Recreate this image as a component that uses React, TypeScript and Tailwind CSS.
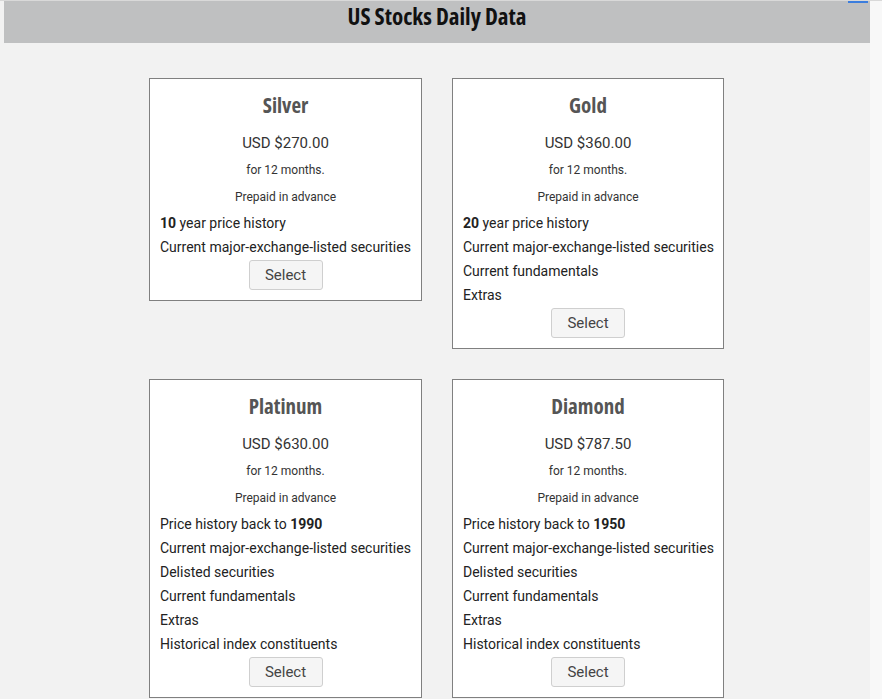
import React from "react";

type Plan = {
  name: string;
  price: string;
  features: React.ReactNode[];
};

const plans: Plan[] = [
  {
    name: "Silver",
    price: "USD $270.00",
    features: [
      <><b>10</b> year price history</>,
      "Current major-exchange-listed securities",
    ],
  },
  {
    name: "Gold",
    price: "USD $360.00",
    features: [
      <><b>20</b> year price history</>,
      "Current major-exchange-listed securities",
      "Current fundamentals",
      "Extras",
    ],
  },
  {
    name: "Platinum",
    price: "USD $630.00",
    features: [
      <>Price history back to <b>1990</b></>,
      "Current major-exchange-listed securities",
      "Delisted securities",
      "Current fundamentals",
      "Extras",
      "Historical index constituents",
    ],
  },
  {
    name: "Diamond",
    price: "USD $787.50",
    features: [
      <>Price history back to <b>1950</b></>,
      "Current major-exchange-listed securities",
      "Delisted securities",
      "Current fundamentals",
      "Extras",
      "Historical index constituents",
    ],
  },
];

function PlanCard({ plan }: { plan: Plan }) {
  return (
    <div className="flex flex-col border border-[#808080] bg-white px-[10px] pt-[14px] pb-[10px] text-center font-['Roboto',sans-serif]">
      <div className="h-[24px] text-[21px] leading-[24px] font-bold text-[#555] font-['Open_Sans','Liberation_Sans_Narrow',sans-serif] [font-stretch:condensed]">
        {plan.name}
      </div>
      <div className="mt-[16px] h-[20px] text-[15px] leading-[20px] text-[#333]">
        {plan.price}
      </div>
      <div className="mt-[7px] h-[20px] text-[12px] leading-[20px] text-[#333]">
        for 12 months.
      </div>
      <div className="mt-[7px] h-[20px] text-[12px] leading-[20px] text-[#333]">
        Prepaid in advance
      </div>
      <ul className="mt-[4px] text-left text-[14px] leading-[24px] text-[#222]">
        {plan.features.map((f, i) => (
          <li key={i} className="whitespace-nowrap">
            {f}
          </li>
        ))}
      </ul>
      <div className="mt-[1px] flex justify-center">
        <button className="h-[30px] w-[74px] rounded-[3px] border border-[#cfcfcf] bg-[#f5f5f5] text-[15px] text-[#444]">
          Select
        </button>
      </div>
    </div>
  );
}

export default function App() {
  return (
    <div className="flex min-h-[699px] w-full border-t border-[#d9d9d9] bg-[#f2f2f2]">
      <div className="flex-1 pl-[4px]">
        <div className="flex h-[42px] items-start justify-center bg-[#bfc0c1]">
          <h1 className="text-[23px] leading-[30px] font-bold text-[#111] font-['Open_Sans','Liberation_Sans_Narrow',sans-serif] [font-stretch:condensed]">
            US Stocks Daily Data
          </h1>
        </div>
        <div className="mt-[35px] grid grid-cols-[273px_272px] items-start justify-start gap-x-[30px] gap-y-[30px] pl-[145px]">
          {plans.map((p) => (
            <PlanCard key={p.name} plan={p} />
          ))}
        </div>
      </div>
      <div className="relative w-[12px] bg-[#f8f8f8]">
        <div className="absolute top-0 right-[14px] h-[2px] w-[20px] bg-[#3b7ddd]" />
      </div>
    </div>
  );
}
